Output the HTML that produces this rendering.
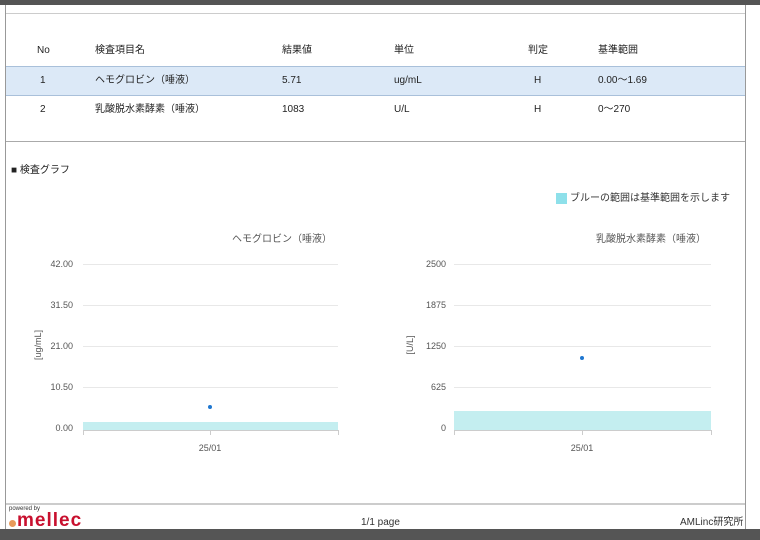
<!DOCTYPE html>
<html><head><meta charset="utf-8"><style>
*{margin:0;padding:0;box-sizing:border-box}
body{width:760px;height:540px;background:#fff;position:relative;overflow:hidden;font-family:"Liberation Sans","Noto Sans CJK JP",sans-serif;color:#222;font-size:10px}
.a{position:absolute;white-space:nowrap;line-height:12px}
</style></head><body>
<div class="a" style="left:0;top:0;width:760px;height:5px;background:#555"></div>
<div class="a" style="left:0;top:529px;width:760px;height:11px;background:#555"></div>
<div class="a" style="left:5px;top:5px;width:1px;height:524px;background:#999"></div>
<div class="a" style="left:745px;top:5px;width:1px;height:524px;background:#999"></div>
<div class="a" style="left:6px;top:13px;width:739px;height:1px;background:#ccc"></div>
<div class="a" style="left:6px;top:66px;width:739px;height:30px;background:#dce9f7;border-top:1px solid #a9c0da;border-bottom:1px solid #a9c0da"></div>
<div class="a" style="left:6px;top:141px;width:739px;height:1px;background:#aaa"></div>
<div class="a" style="left:6px;top:503px;width:739px;height:2px;background:#ccc"></div>

<div class="a" style="left:37px;top:45px">No</div>
<div class="a" style="left:95px;top:45px">検査項目名</div>
<div class="a" style="left:282px;top:45px">結果値</div>
<div class="a" style="left:394px;top:45px">単位</div>
<div class="a" style="left:528px;top:45px">判定</div>
<div class="a" style="left:598px;top:45px">基準範囲</div>

<div class="a" style="left:40px;top:75px">1</div>
<div class="a" style="left:95px;top:75px">ヘモグロビン（唾液）</div>
<div class="a" style="left:282px;top:75px">5.71</div>
<div class="a" style="left:394px;top:75px">ug/mL</div>
<div class="a" style="left:534px;top:75px">H</div>
<div class="a" style="left:598px;top:75px">0.00～1.69</div>

<div class="a" style="left:40px;top:104px">2</div>
<div class="a" style="left:95px;top:104px">乳酸脱水素酵素（唾液）</div>
<div class="a" style="left:282px;top:104px">1083</div>
<div class="a" style="left:394px;top:104px">U/L</div>
<div class="a" style="left:534px;top:104px">H</div>
<div class="a" style="left:598px;top:104px">0～270</div>

<div class="a" style="left:11px;top:165px">■ 検査グラフ</div>
<div class="a" style="left:556px;top:193px;width:11px;height:11px;background:#8ee0ea"></div>
<div class="a" style="left:570px;top:193px;color:#333">ブルーの範囲は基準範囲を示します</div>

<svg class="a" style="left:0;top:0" width="760" height="540">
<g stroke="#e8e8e8" stroke-width="1">
<line x1="83" x2="338" y1="264.5" y2="264.5"/><line x1="83" x2="338" y1="305.5" y2="305.5"/><line x1="83" x2="338" y1="346.5" y2="346.5"/><line x1="83" x2="338" y1="387.5" y2="387.5"/>
<line x1="454" x2="711" y1="264.5" y2="264.5"/><line x1="454" x2="711" y1="305.5" y2="305.5"/><line x1="454" x2="711" y1="346.5" y2="346.5"/><line x1="454" x2="711" y1="387.5" y2="387.5"/>
</g>
<rect x="83" y="422" width="255" height="8" fill="#c4eef0"/>
<rect x="454" y="411" width="257" height="19" fill="#c4eef0"/>
<g stroke="#ccc"><line x1="83" x2="338" y1="430.5" y2="430.5"/><line x1="454" x2="711" y1="430.5" y2="430.5"/>
<line x1="83.5" x2="83.5" y1="430" y2="435"/><line x1="210.5" x2="210.5" y1="430" y2="435"/><line x1="338.5" x2="338.5" y1="430" y2="435"/>
<line x1="454.5" x2="454.5" y1="430" y2="435"/><line x1="582.5" x2="582.5" y1="430" y2="435"/><line x1="711.5" x2="711.5" y1="430" y2="435"/></g>
<circle cx="210" cy="407" r="2" fill="#1f77d0"/>
<circle cx="582" cy="358" r="2" fill="#1f77d0"/>
<g font-size="9" fill="#555" font-family="Liberation Sans,sans-serif" text-anchor="end">
<text x="73" y="267">42.00</text><text x="73" y="308">31.50</text><text x="73" y="349">21.00</text><text x="73" y="390">10.50</text><text x="73" y="431">0.00</text>
<text x="446" y="267">2500</text><text x="446" y="308">1875</text><text x="446" y="349">1250</text><text x="446" y="390">625</text><text x="446" y="431">0</text>
</g>
<g font-size="9" fill="#555" font-family="Liberation Sans,sans-serif" text-anchor="middle">
<text x="210" y="451">25/01</text><text x="582" y="451">25/01</text>
<text transform="translate(41,345) rotate(-90)">[ug/mL]</text>
<text transform="translate(413,345) rotate(-90)">[U/L]</text>
</g>
<g font-size="10" fill="#555" font-family="Liberation Sans,Noto Sans CJK JP,sans-serif" text-anchor="end">
<text x="332" y="242">ヘモグロビン（唾液）</text><text x="706" y="242">乳酸脱水素酵素（唾液）</text>
</g>
</svg>

<div class="a" style="left:9px;top:506px;font-size:6px;line-height:7px;color:#333">powered by</div>
<div class="a" style="left:9px;top:520px;width:7px;height:7px;border-radius:50%;background:#e89a5a"></div>
<div class="a" style="left:17px;top:512px;font-size:19px;font-weight:bold;color:#c8102e;letter-spacing:1px;line-height:17px">mellec</div>
<div class="a" style="left:361px;top:517px;font-size:10px;color:#333">1/1 page</div>
<div class="a" style="left:680px;top:517px;font-size:10px;color:#333">AMLinc研究所</div>
</body></html>
